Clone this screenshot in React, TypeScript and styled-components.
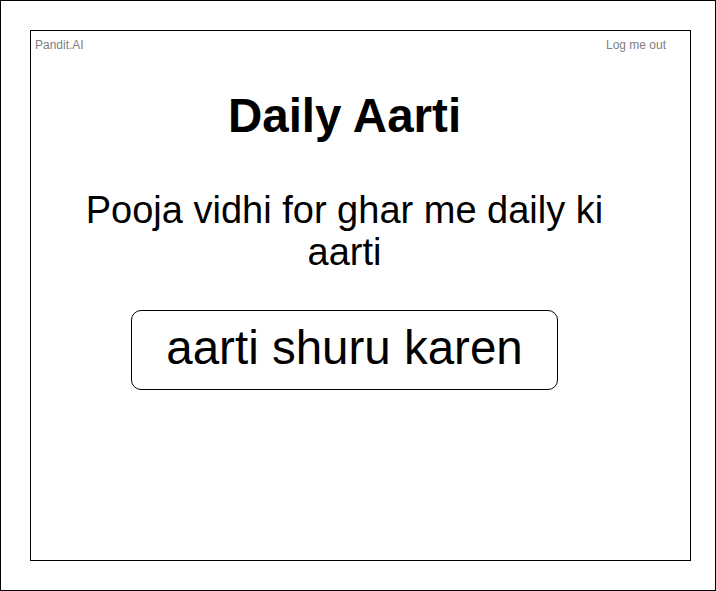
import React from "react";
import styled, { createGlobalStyle } from "styled-components";

const GlobalStyle = createGlobalStyle`
  html, body {
    margin: 0;
    padding: 0;
    background: #ffffff;
  }

  body {
    font-family: "Liberation Sans", Arial, Helvetica, sans-serif;
    color: #000000;
  }
`;

const Frame = styled.div`
  box-sizing: border-box;
  width: 716px;
  height: 591px;
  border: 1px solid #000000;
  padding: 29px 0 0 29px;
  background: #ffffff;
`;

const Screen = styled.div`
  box-sizing: border-box;
  width: 661px;
  height: 531px;
  border: 1px solid #000000;
  display: flex;
  flex-direction: column;
`;

const TopBar = styled.div`
  display: flex;
  justify-content: space-between;
  align-items: center;
  padding: 7px 24px 0 4px;
`;

const TopLink = styled.a`
  font-size: 12px;
  line-height: 14px;
  color: #808080;
  text-decoration: none;
  cursor: pointer;
`;

const Main = styled.main`
  display: flex;
  flex-direction: column;
  align-items: center;
  padding-right: 32px;
`;

const Title = styled.h1`
  margin: 37px 0 0;
  font-size: 47.5px;
  line-height: 53px;
  font-weight: 700;
  text-align: center;
`;

const Subtitle = styled.p`
  margin: 47px 0 0;
  max-width: 540px;
  font-size: 38px;
  line-height: 42px;
  text-align: center;
`;

const StartButton = styled.button`
  box-sizing: border-box;
  margin-top: 37px;
  width: 427px;
  height: 80px;
  border: 1px solid #000000;
  border-radius: 10px;
  background: #ffffff;
  font-family: "Liberation Sans", Arial, Helvetica, sans-serif;
  font-size: 47.5px;
  line-height: 1;
  color: #000000;
  display: flex;
  align-items: center;
  justify-content: center;
  padding: 0 0 5px;
  cursor: pointer;
`;

const App = () => {
  return (
    <>
      <GlobalStyle />
      <Frame>
        <Screen>
          <TopBar>
            <TopLink>Pandit.AI</TopLink>
            <TopLink>Log me out</TopLink>
          </TopBar>
          <Main>
            <Title>Daily Aarti</Title>
            <Subtitle>Pooja vidhi for ghar me daily ki aarti</Subtitle>
            <StartButton>aarti shuru karen</StartButton>
          </Main>
        </Screen>
      </Frame>
    </>
  );
};

export default App;
